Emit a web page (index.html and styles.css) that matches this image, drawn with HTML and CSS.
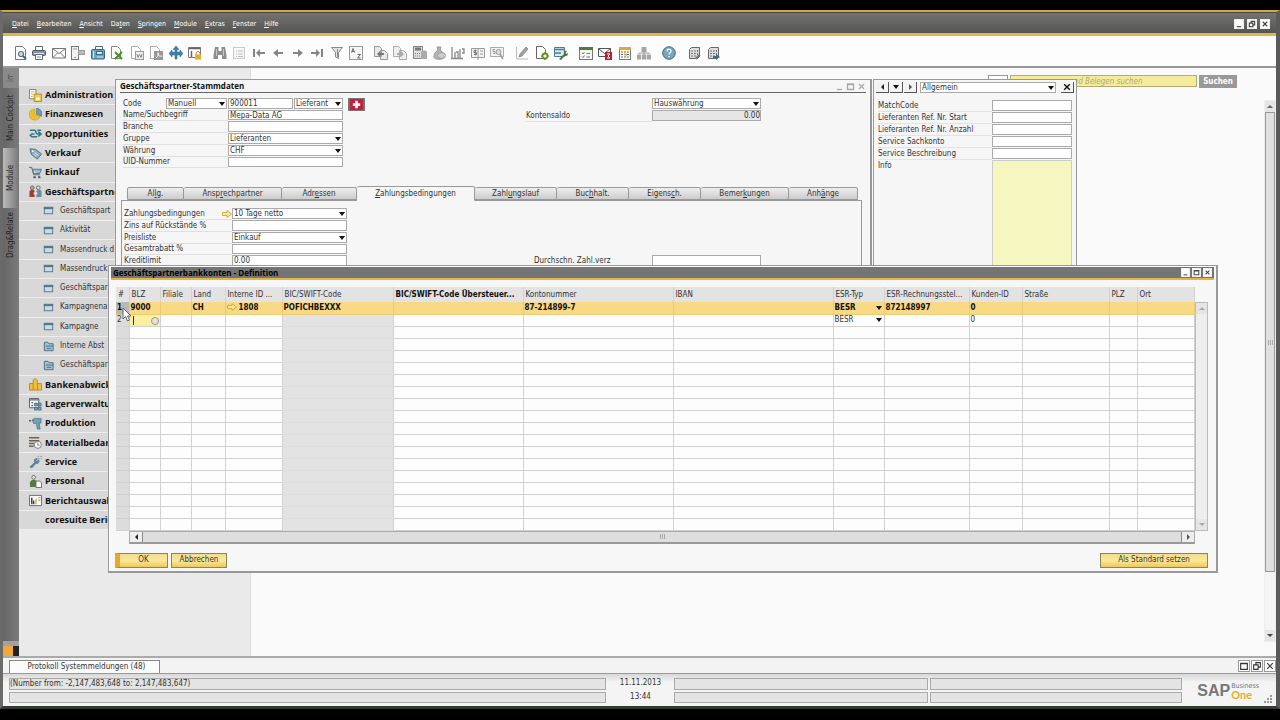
FILE: index.html
```html
<!DOCTYPE html>
<html lang="de">
<head>
<meta charset="utf-8">
<title>SAP Business One</title>
<link rel="stylesheet" href="styles.css">
</head>
<body>
<svg class="defs" aria-hidden="true">
  <symbol id="preview" viewBox="0 0 14 14"><path d="M2.500 .5h7l3 3v10h-10z" fill="#fff" stroke="#777"/><circle cx="8" cy="8" r="2.500" fill="#cfe0ea" stroke="#56707f" stroke-width="1.200"/><path d="M10 10l3 3" stroke="#35658a" stroke-width="1.800"/></symbol>
  <symbol id="print" viewBox="0 0 14 14"><path d="M3.500 5V.5h7V5" fill="#fff" stroke="#667"/><rect x=".5" y="4.500" width="13" height="5" rx="1" fill="#8297a3" stroke="#4b5c66"/><path d="M2 7.500h10" stroke="#dce7ee"/><path d="M3.500 8.500h7v5h-7z" fill="#fff" stroke="#667"/><path d="M5 11h4" stroke="#5c92b8"/></symbol>
  <symbol id="mail" viewBox="0 0 14 14"><path d="M.5 2.500h13v9.500H.5zM.5 2.500l6.500 5 6.500-5M.5 12l5-5M13.500 12l-5-5" fill="#fafafa" stroke="#777"/></symbol>
  <symbol id="phone" viewBox="0 0 14 14"><rect x=".5" y=".5" width="7" height="13" fill="#f2f2f2" stroke="#777"/><path d="M2 3h4M3 11.500h2" stroke="#999"/><rect x="7.500" y="4.500" width="6" height="4" fill="#bbb" stroke="#999"/></symbol>
  <symbol id="fax" viewBox="0 0 14 14"><path d="M4.500 4V.5h7V4" fill="#fff" stroke="#567"/><rect x=".5" y="3.500" width="13" height="9.500" rx="1" fill="#6fa4c2" stroke="#386784"/><rect x="5.500" y="5.500" width="6" height="3" fill="#dceaf2" stroke="#386784"/><path d="M2.500 5v7M6 11h6" stroke="#d4e6f0"/></symbol>
  <symbol id="excel" viewBox="0 0 14 14"><path d="M1.500 .5h6l3 3v9h-9z" fill="#fff" stroke="#888"/><path d="M5 6l7 7M12 6l-7 7" stroke="#4c8b30" stroke-width="2"/></symbol>
  <symbol id="word" viewBox="0 0 14 14"><path d="M1.500 .5h6l3 3v9h-9z" fill="#fff" stroke="#aaa"/><rect x="5.500" y="5.500" width="8" height="8" fill="#eee" stroke="#999"/><path d="M7 8l1 3.500 1.500-3 1.500 3L12 8" fill="none" stroke="#888"/></symbol>
  <symbol id="pdf" viewBox="0 0 14 14"><path d="M1.500 .5h6l3 3v9h-9z" fill="#fff" stroke="#aaa"/><rect x="5" y="5" width="9" height="9" fill="#999"/><path d="M7 12c3-2 3-6 2-5s1 4 4 3" fill="none" stroke="#fff"/></symbol>
  <symbol id="move" viewBox="0 0 14 14"><path d="M7 0l3 3.500H8V6h3V4l3 3.500L11 11V9H8v4H6V9H3v2L0 7.500 3 4v2h3V3.500H4z" fill="#3d83ad" stroke="#28678d" stroke-width=".5"/></symbol>
  <symbol id="lock" viewBox="0 0 14 14"><path d="M.5 1.500h12v10H.5z" fill="#fff" stroke="#777"/><path d="M1 2.500h11M3.500 5v6" stroke="#666" stroke-width="1.500"/><path d="M8 9V7.500a2 2 0 014 0V9" fill="none" stroke="#b88a28"/><rect x="7" y="8.500" width="6" height="5" fill="#e8ad29"/></symbol>
  <symbol id="find" viewBox="0 0 14 14"><path d="M2 1h3.500v4h3V1H12l1.500 8v4H9V9H5v4H.5V9z" fill="#8e8e8e"/><path d="M3.500 3v7M10.500 3v7" stroke="#c5c5c5"/></symbol>
  <symbol id="newrec" viewBox="0 0 14 14"><path d="M1.500 1.500h11v11h-11z" fill="#f8f8f8" stroke="#999" stroke-dasharray="1 1"/><path d="M4 5h1m1 0h5M4 8h1m1 0h5M4 10.500h1m1 0h5" stroke="#bbb"/></symbol>
  <symbol id="first" viewBox="0 0 14 14"><path d="M1 3h2v8H1zM4 7l4-4v3h5v2H8v3z" fill="#858585"/></symbol>
  <symbol id="prev" viewBox="0 0 14 14"><path d="M2 7l5-4v3h5v2H7v3z" fill="#858585"/></symbol>
  <symbol id="next" viewBox="0 0 14 14"><path d="M12 7L7 3v3H2v2h5v3z" fill="#858585"/></symbol>
  <symbol id="last" viewBox="0 0 14 14"><path d="M13 3h-2v8h2zM10 7L6 3v3H1v2h5v3z" fill="#858585"/></symbol>
  <symbol id="filter" viewBox="0 0 14 14"><path d="M1.500 1.500h11L8.500 6.500v6l-3-1.500V6.500z" fill="#e4e4e4" stroke="#888"/><path d="M7.500 3v8" stroke="#888"/></symbol>
  <symbol id="sort" viewBox="0 0 14 14"><rect x=".5" y=".5" width="13" height="13" fill="#f5f5f5" stroke="#999"/><path d="M2.500 6.500l1.500-4 1.500 4M3 5.500h2M8.500 8.500h3l-3 3.500h3" fill="none" stroke="#666"/></symbol>
  <symbol id="docleft" viewBox="0 0 14 14"><path d="M.5 .5h5l2 2v8h-7zM6.500 4.500h4l3 3v6h-7z" fill="#eaeaea" stroke="#999"/><path d="M3 8l3-3v2h4v2H6v2z" fill="#777"/></symbol>
  <symbol id="docright" viewBox="0 0 14 14"><path d="M.5 .5h5l2 2v8h-7zM6.500 4.500h4l3 3v6h-7z" fill="#eee" stroke="#aaa"/><path d="M11 8L8 5v2H4v2h4v2z" fill="#aaa"/></symbol>
  <symbol id="calc" viewBox="0 0 14 14"><rect x=".5" y=".5" width="9" height="12" fill="#ddd" stroke="#888"/><path d="M2 3h6" stroke="#777" stroke-width="3"/><path d="M2 7.500h6M2 10h6" stroke="#888" stroke-dasharray="1 1"/><path d="M8 6c2-2 5-2 6 0v7H8z" fill="#aaa"/></symbol>
  <symbol id="money" viewBox="0 0 14 14"><path d="M5 1h4L8 4c3 2 4 4 4 7 0 3-10 3-10 0 0-3 1-5 4-7z" fill="#b5b5b5" stroke="#949494"/><ellipse cx="9.500" cy="9.500" rx="4" ry="3" fill="#ccc" stroke="#999"/></symbol>
  <symbol id="chart" viewBox="0 0 14 14"><path d="M1 1v11M4 6v6M5 6h2v6M9 3v9M11 3h2v4h-2M0 12.500h12" fill="none" stroke="#888" stroke-width="1.300"/></symbol>
  <symbol id="ledger" viewBox="0 0 14 14"><path d="M.5 2.500h13v9H.5zM7 2.500V14M9 5h3M9 8h3" fill="#f3f3f3" stroke="#999"/><path d="M5.500 4.500H3v2h2.500v2H3M4.300 3.500v6" fill="none" stroke="#777"/></symbol>
  <symbol id="audit" viewBox="0 0 14 14"><path d="M.5 1.500h13v9H.5z" fill="#f3f3f3" stroke="#aaa"/><path d="M5 3.500H3v2h2v2H3" fill="none" stroke="#999"/><circle cx="8.500" cy="6" r="2.500" fill="#ddd" stroke="#999"/><path d="M10 8l3 5" stroke="#999" stroke-width="1.500"/></symbol>
  <symbol id="pencil" viewBox="0 0 14 14"><path d="M1.500 1v12H13" fill="none" stroke="#bbb"/><path d="M4 11l1-3 6-7 2 2-6 7z" fill="#a5a5a5" stroke="#777" stroke-width=".7"/></symbol>
  <symbol id="docgear" viewBox="0 0 14 14"><path d="M1.500 .5h6l3 3v9h-9z" fill="#fff" stroke="#666"/><circle cx="10" cy="10" r="2.500" fill="#fff" stroke="#659321" stroke-width="1.800"/><path d="M10 6v1.500M10 12.500V14M6 10h1.500M12.500 10H14" stroke="#659321" stroke-width="1.500"/></symbol>
  <symbol id="tools" viewBox="0 0 14 14"><path d="M.5 1.500h10v9H.5z" fill="#dceaf1" stroke="#4a7c98"/><path d="M1 3.500h9M1 7h6" stroke="#4a7c98" stroke-width="1.500"/><path d="M5 13l5-5c-1-3 1-4 3-3L11.500 7l1 1L14 6.500c0 3-1.500 4-3.500 3.500L7 14z" fill="#497a2c"/></symbol>
  <symbol id="tasks" viewBox="0 0 14 14"><rect x=".5" y="1.500" width="13" height="12" fill="#f4f4f4" stroke="#777"/><path d="M0 2.500h14" stroke="#537b32" stroke-width="3"/><path d="M3 7l1 1 1.500-2M7.500 7.500H11M3 10.500l1 1 1.500-2M7.500 11H11" fill="none" stroke="#777"/></symbol>
  <symbol id="alert" viewBox="0 0 14 14"><path d="M.5 2.500h12v8H.5zM.5 2.500l6 5 6-5" fill="#fff" stroke="#555"/><rect x="7" y="6" width="7" height="8" fill="#b9202c"/><path d="M9 8h3l-2 2 2 2H9" fill="none" stroke="#fff"/></symbol>
  <symbol id="calendar" viewBox="0 0 14 14"><rect x="1.500" y="1.500" width="11" height="12" fill="#fff" stroke="#777"/><path d="M1 2.500h12" stroke="#e2aa29" stroke-width="3"/><path d="M3 6h8M3 8.500h8M3 11h8" stroke="#666" stroke-dasharray="2 1"/><path d="M6 8.500h3" stroke="#e2aa29" stroke-width="2"/></symbol>
  <symbol id="org" viewBox="0 0 14 14"><path d="M4.500 1h5v5h-5zM0 8.500h4.200v5H0zM5 8.500h4.200v5H5zM9.800 8.500H14v5H9.800z" fill="#a6a6a6"/><path d="M7 5v4M2 8V7h10v1" fill="none" stroke="#999"/></symbol>
  <symbol id="help" viewBox="0 0 14 14"><circle cx="7" cy="7" r="6.300" fill="#78a5bd" stroke="#426a80"/><path d="M5 5.500c0-3 4-3 4-.5C9 7 7 6.500 7 8.500M7 10v1.300" fill="none" stroke="#fff" stroke-width="1.200"/></symbol>
  <symbol id="server" viewBox="0 0 14 14"><path d="M2.500 3.500l2-2h8v9l-2 2h-8z" fill="#ddd" stroke="#666"/><path d="M4 5h5M4 7.500h5M4 10h5M10.500 4v6" stroke="#777" stroke-dasharray="2 1"/><path d="M8 12l4-4 1.500 1.500-4 4z" fill="#777"/></symbol>
  <symbol id="server2" viewBox="0 0 14 14"><path d="M2.500 3.500l2-2h8v9l-2 2h-8z" fill="#ddd" stroke="#666"/><path d="M4 5h5M4 7.500h5M4 10h5M10.500 4v6" stroke="#777" stroke-dasharray="2 1"/><path d="M7 10h3V8l4 3-4 3v-2H7z" fill="#3d6d94"/></symbol>

  <symbol id="admin" viewBox="0 0 14 14"><path d="M.5 .5h7v10h-7z" fill="#fff" stroke="#777"/><path d="M2 3h4M2 5.500h3M2 8h2" stroke="#e0a32e"/><path d="M5.500 5.500h8v8h-8z" fill="#f5c944" stroke="#b08a2b"/><path d="M7.500 9h4v3h-4z" fill="#fff"/></symbol>
  <symbol id="finance" viewBox="0 0 14 14"><path d="M6 1a6 6 0 106 8L6.500 7z" fill="#f3bc2b" stroke="#c2922a" stroke-width=".6"/><path d="M8 0a6.500 6.500 0 015.500 9L8 6.500z" fill="#6b9ab4" stroke="#406b82" stroke-width=".6"/></symbol>
  <symbol id="opport" viewBox="0 0 14 14"><path d="M1 3.500h5c2 0 1 4 3 4h4M10 5l3 2.500L10 10M13 3.500H9M6 7.500H3L1.500 9 3 10.500h6" fill="none" stroke="#397582" stroke-width="1.800"/></symbol>
  <symbol id="sales" viewBox="0 0 14 14"><path d="M1 2l6 .5 6.500 5L9 13 2.500 8z" fill="#89aebf" stroke="#446f83"/><circle cx="4" cy="4.500" r="1" fill="#fff"/><path d="M6 6l4 3M5 8l3 2" stroke="#dceaf0"/></symbol>
  <symbol id="cart" viewBox="0 0 14 14"><path d="M0 1.500h3l2 8h7M4 3.500h9.500l-2 4.500H5z" fill="#9db9c6" stroke="#4c7284"/><circle cx="6" cy="12" r="1.300" fill="#46606d"/><circle cx="11" cy="12" r="1.300" fill="#46606d"/></symbol>
  <symbol id="partner" viewBox="0 0 14 14"><circle cx="3.500" cy="3" r="2" fill="#aaa" stroke="#666"/><circle cx="10" cy="3" r="2" fill="#ddd" stroke="#666"/><path d="M.5 13V7c1-2 5-2 5.500 0v6z" fill="#a73b31"/><path d="M8 13V7c1-2 5-2 5.500 0v6z" fill="#688d9d"/><path d="M5 9h4" stroke="#eee" stroke-width="2"/></symbol>
  <symbol id="form" viewBox="0 0 14 14"><rect x="2.500" y="3.500" width="9" height="7" fill="#c7dbe4" stroke="#557888"/><path d="M2 4.500h10" stroke="#4c768b" stroke-width="2"/></symbol>
  <symbol id="folder" viewBox="0 0 14 14"><path d="M2.500 11.500v-9h4l1 1.500h4.500v7.500z" fill="#a6c2d0" stroke="#497083"/><path d="M4 6.500h8M5 9h5" stroke="#497083"/></symbol>
  <symbol id="bank" viewBox="0 0 14 14"><path d="M.5 13V6h4V2c2-2 5-1 4.500 2v2h4.500v7z" fill="#f2bf3c" stroke="#b8862c"/><path d="M4.500 6v7M9 6v7" stroke="#b8862c"/></symbol>
  <symbol id="stock" viewBox="0 0 14 14"><path d="M.5 .5h10v10H.5z" fill="#fff" stroke="#555"/><path d="M1 2h9M2.500 5h2M2.500 8h2" stroke="#567" stroke-width="1.500"/><path d="M6 5.500h3v3H6zM10 5.500h3v3h-3zM6 10h3v3H6zM10 10h3v3h-3z" fill="#74a8bc" stroke="#38667a" stroke-width=".8"/></symbol>
  <symbol id="drill" viewBox="0 0 14 14"><path d="M0 4h4" stroke="#555" stroke-width="1.500" stroke-dasharray="2 1"/><path d="M4 2.500l2-1h7v5h-2l1 6.500H9L8 7H5z" fill="#70a0b6" stroke="#416b7f" stroke-width=".7"/></symbol>
  <symbol id="mrp" viewBox="0 0 14 14"><path d="M0 2h11M0 5h11M0 8h6M0 11h5" stroke="#6e6252" stroke-width="1.600"/><circle cx="9.500" cy="9.500" r="3.800" fill="#fff" stroke="#777"/><path d="M9.500 7v3h2" fill="none" stroke="#777"/></symbol>
  <symbol id="service" viewBox="0 0 14 14"><path d="M1 13l5-5c-1-3 1-5 3-4L7.500 6l1 1L10.500 5c1 3-1 5-3 4L3 14z" fill="#568ba4" stroke="#396577" stroke-width=".6"/><path d="M9 1.500h5M10 4h4" stroke="#999" stroke-dasharray="2 1"/></symbol>
  <symbol id="staff" viewBox="0 0 14 14"><circle cx="5" cy="2.500" r="2" fill="#eee" stroke="#666"/><path d="M1 13V8c1-4 7-4 8 0v5z" fill="#567a43"/><path d="M7.500 6.500h4l2 2v5h-6z" fill="#fff" stroke="#666"/></symbol>
  <symbol id="report" viewBox="0 0 14 14"><path d="M.5 1.500h13v11H.5z" fill="#fff" stroke="#666"/><path d="M3 4v7M5 7v4" stroke="#334" stroke-width="1.500"/><path d="M7.500 5v6" stroke="#e6b32b" stroke-width="1.700"/><path d="M10 4h2.500M10 6.500h2.500" stroke="#888"/></symbol>
  <symbol id="arrow" viewBox="0 0 10 8"><path d="M.5 2.500H5v-2L9.500 4 5 7.500v-2H.5z" fill="#ffe97c" stroke="#c9b055"/></symbol>
  <symbol id="min" viewBox="0 0 9 9"><path d="M2 7.500h5"/></symbol>
  <symbol id="max" viewBox="0 0 9 9"><path d="M1.500 2h6v5.500h-6zM1.500 2.500h6"/></symbol>
  <symbol id="restore" viewBox="0 0 9 9"><path d="M3.500 3V1.500h4v4H6M1.500 3.500h4v4h-4z"/></symbol>
  <symbol id="close" viewBox="0 0 9 9"><path d="M2 2l5 5M7 2l-5 5"/></symbol>
</svg>

<div class="app">
  <header class="menubar">
    <nav class="menus">
      <button><u>D</u>atei</button><button><u>B</u>earbeiten</button><button><u>A</u>nsicht</button><button>Da<u>t</u>en</button><button><u>S</u>pringen</button><button><u>M</u>odule</button><button><u>E</u>xtras</button><button><u>F</u>enster</button><button><u>H</u>ilfe</button>
    </nav>
    <div class="winbtns main-btns">
      <button aria-label="Minimieren"><svg><use href="#min"/></svg></button>
      <button aria-label="Wiederherstellen"><svg><use href="#restore"/></svg></button>
      <button aria-label="Schließen"><svg><use href="#close"/></svg></button>
    </div>
  </header>

  <div class="toolbar" id="toolbar"></div>

  <main class="desk">
    <div class="rail">
      <span class="rail-tab rail-first">irr</span>
      <button class="rail-tab rail-cockpit">Main Cockpit</button>
      <button class="rail-tab rail-module">Module</button>
      <button class="rail-tab rail-drag">Drag&amp;Relate</button>
      <span class="rail-end"></span>
    </div>

    <aside class="side">
      <ul class="modules" id="modules"></ul>
    </aside>

    <section class="work">
      <div class="search">
        <span class="search-kind"></span>
        <input type="text" placeholder="und Belegen suchen" aria-label="Suche in Stammdaten und Belegen">
        <button>Suchen</button>
      </div>
      <div class="vscroll work-scroll">
        <button class="up" aria-label="Nach oben"></button>
        <span class="thumb"><i class="grip"></i></span>
        <button class="down" aria-label="Nach unten"></button>
      </div>
    </section>

    <section class="window partner">
      <div class="ptitle">
        <h2>Geschäftspartner-Stammdaten</h2>
        <div class="winbtns faint">
          <button aria-label="Minimieren"><svg><use href="#min"/></svg></button>
          <button aria-label="Maximieren"><svg><use href="#max"/></svg></button>
          <button aria-label="Schließen"><svg><use href="#close"/></svg></button>
        </div>
      </div>
      <div class="head-form">
        <div class="fields">
          <div class="code-row">
            <label for="code">Code</label>
            <span class="sel"><select aria-label="Nummernserie"><option>Manuell</option></select></span>
            <input id="code" type="text" value="900011">
            <span class="sel"><select aria-label="Art"><option>Lieferant</option></select></span>
          </div>
          <label for="name">Name/Suchbegriff</label><input id="name" type="text" value="Mepa-Data AG">
          <label for="branche">Branche</label><input id="branche" type="text">
          <label for="gruppe">Gruppe</label><span class="sel"><select id="gruppe"><option>Lieferanten</option></select></span>
          <label for="curr">Währung</label><span class="sel"><select id="curr"><option>CHF</option></select></span>
          <label for="uid">UID-Nummer</label><input id="uid" type="text">
        </div>
        <svg class="flag" viewBox="0 0 16 12"><rect width="16" height="12" fill="#c4203c"/><path d="M8 2v8M4 6h8" stroke="#fff" stroke-width="3"/></svg>
        <div class="saldo">
          <span class="sel"><select aria-label="Währungsanzeige"><option>Hauswährung</option></select></span>
          <label for="saldo">Kontensaldo</label><input id="saldo" class="ro" type="text" value="0.00" readonly>
        </div>
      </div>
      <div class="tabs">
        <button>Al<u>l</u>g.</button><button>Ansp<u>r</u>echpartner</button><button>Adr<u>e</u>ssen</button><button class="on"><u>Z</u>ahlungsbedingungen</button><button>Zahl<u>u</u>ngslauf</button><button>Buc<u>h</u>halt.</button><button>Eigens<u>c</u>h.</button><button>Bemer<u>k</u>ungen</button><button>Anh<u>ä</u>nge</button>
      </div>
      <div class="pane">
        <div class="fields pay">
          <label for="zb">Zahlungsbedingungen<svg class="link"><use href="#arrow"/></svg></label><span class="sel"><select id="zb"><option>10 Tage netto</option></select></span>
          <label for="zins">Zins auf Rückstände %</label><input id="zins" type="text">
          <label for="preis">Preisliste</label><span class="sel"><select id="preis"><option>Einkauf</option></select></span>
          <label for="rabatt">Gesamtrabatt %</label><input id="rabatt" type="text">
          <label for="limit">Kreditlimit</label><input id="limit" type="text" value="0.00">
        </div>
        <div class="delay"><label for="verz">Durchschn. Zahl.verz</label><input id="verz" type="text"></div>
      </div>
    </section>

    <section class="window extra">
      <div class="extra-bar">
        <button class="nav" aria-label="Zurück"><i class="tri left"></i></button>
        <button class="nav" aria-label="Liste"><i class="tri"></i></button>
        <button class="nav" aria-label="Weiter"><i class="tri right"></i></button>
        <span class="sel"><select aria-label="Kategorie"><option>Allgemein</option></select></span>
        <button class="nav x" aria-label="Schließen"><svg><use href="#close"/></svg></button>
      </div>
      <div class="extra-form">
        <label for="e1">MatchCode</label><input id="e1" type="text">
        <label for="e2">Lieferanten Ref. Nr. Start</label><input id="e2" type="text">
        <label for="e3">Lieferanten Ref. Nr. Anzahl</label><input id="e3" type="text">
        <label for="e4">Service Sachkonto</label><input id="e4" type="text">
        <label for="e5">Service Beschreibung</label><input id="e5" type="text">
        <label for="e6" class="info">Info</label><textarea id="e6"></textarea>
      </div>
    </section>

    <section class="window dialog">
      <div class="dtitle">
        <h2>Geschäftspartnerbankkonten - Definition</h2>
        <div class="winbtns">
          <button aria-label="Minimieren"><svg><use href="#min"/></svg></button>
          <button aria-label="Maximieren"><svg><use href="#max"/></svg></button>
          <button aria-label="Schließen"><svg><use href="#close"/></svg></button>
        </div>
      </div>
      <div class="grid-area">
        <table class="accounts">
          <colgroup><col class="w-no"><col class="w-s"><col class="w-s"><col class="w-land"><col class="w-id"><col class="w-bic"><col class="w-over"><col class="w-konto"><col class="w-iban"><col class="w-typ"><col class="w-stel"><col class="w-kid"><col class="w-str"><col class="w-plz"><col></colgroup>
          <thead><tr><th>#</th><th>BLZ</th><th>Filiale</th><th>Land</th><th>Interne ID ...</th><th>BIC/SWIFT-Code</th><th class="strong">BIC/SWIFT-Code Übersteuer...</th><th>Kontonummer</th><th>IBAN</th><th>ESR-Typ</th><th>ESR-Rechnungsstel...</th><th>Kunden-ID</th><th>Straße</th><th>PLZ</th><th>Ort</th></tr></thead>
          <tbody id="rows">
            <tr class="current"><td>1</td><td>9000</td><td></td><td>CH</td><td><svg class="link"><use href="#arrow"/></svg>1808</td><td>POFICHBEXXX</td><td></td><td>87-214899-7</td><td></td><td><span class="sel"><select aria-label="ESR-Typ Zeile 1"><option>BESR</option></select></span></td><td>872148997</td><td>0</td><td></td><td></td><td></td></tr>
            <tr><td>2</td><td class="edit"><span class="caret"></span><i class="picker"></i></td><td></td><td></td><td></td><td></td><td></td><td></td><td></td><td><span class="sel"><select aria-label="ESR-Typ Zeile 2"><option>BESR</option></select></span></td><td></td><td>0</td><td></td><td></td><td></td></tr>
          </tbody>
        </table>
        <div class="vscroll table-scroll">
          <button class="up" aria-label="Nach oben"></button>
          <button class="down" aria-label="Nach unten"></button>
        </div>
        <div class="hscroll">
          <button aria-label="Nach links"><i class="tri left"></i></button>
          <span class="thumb"><i class="grip"></i></span>
          <button aria-label="Nach rechts"><i class="tri right"></i></button>
        </div>
      </div>
      <div class="actions">
        <button class="gold ok">OK</button>
        <button class="gold">Abbrechen</button>
        <button class="gold std">Als Standard setzen</button>
      </div>
      <svg class="cursor" viewBox="0 0 10 15"><path d="M1 1v11l2.500-2.500L5.500 14l2-1-2-4H9z" fill="#fff" stroke="#666"/></svg>
    </section>
  </main>

  <div class="logbar">
    <button class="logtab">Protokoll Systemmeldungen (48)</button>
    <div class="winbtns log-btns">
      <button aria-label="Maximieren"><svg><use href="#max"/></svg></button>
      <button aria-label="Wiederherstellen"><svg><use href="#restore"/></svg></button>
      <button aria-label="Schließen"><svg><use href="#close"/></svg></button>
    </div>
  </div>

  <footer class="status">
    <div class="msg">(Number from: -2,147,483,648 to: 2,147,483,647)</div><time>11.11.2013</time><div class="msg"></div><div class="msg"></div>
    <div class="logo"><b>SAP</b><span><small>Business</small><em>One</em></span>
      <svg class="size-grip" viewBox="0 0 8 8"><path d="M6 0h2v2H6zM3 3h2v2H3zM6 3h2v2H6zM0 6h2v2H0zM3 6h2v2H3zM6 6h2v2H6z" fill="#999"/></svg>
    </div>
    <div class="msg"></div><time>13:44</time><div class="msg"></div><div class="msg"></div>
  </footer>
</div>
<script src="app.js"></script>
</body>
</html>
```
FILE: styles.css
```css
* { box-sizing: border-box; }
body {
  margin: 0;
  min-height: 100vh;
  padding: 10px 0 11px;
  background: #000;
  color: #333;
  font: 8px/10px "DejaVu Sans Condensed", "DejaVu Sans", sans-serif;
  display: flex;
  overflow: hidden;
}
button, input, select, textarea { font: inherit; color: inherit; margin: 0; padding: 0; border: 0; border-radius: 0; background: none; min-width: 0; }
h2 { margin: 0; font: bold 8px/10px "Open Sans", sans-serif; color: #111; }
ul { list-style: none; margin: 0; padding: 0; }
svg { display: block; }
u { text-decoration-thickness: 1px; text-underline-offset: 1px; }
.defs { position: absolute; width: 0; height: 0; }

.app { flex: 1; min-width: 0; display: flex; flex-direction: column; border-top: 2px solid #d9a840; border-right: 4px solid #5a5a5a; border-bottom: 3px solid #353a35; border-left: 3px solid #6a6a6a; background: #fafafa; }

.menubar { height: 24px; padding: 2px 6px 0 9px; border-top: 1px solid #474747; border-bottom: 3px solid #e3b548; background: linear-gradient(#727472, #555553); color: #fff; display: flex; align-items: center; justify-content: space-between; }
.menus { display: flex; gap: 8px; }
.menus button { font-size: 7px; line-height: 10px; }

.winbtns { display: flex; gap: 2px; }
.winbtns button { width: 9px; height: 9px; background: #fff; color: #444; border: 1px solid #eee; }
.winbtns svg, .nav.x svg { width: 100%; height: 100%; fill: none; stroke: currentColor; stroke-width: 1.3; }
.main-btns { gap: 3px; }
.main-btns button { width: 10px; height: 10px; }
.faint button { color: #aaa; background: none; border: 0; }

.toolbar { height: 32px; padding: 4px 0 0 10px; display: flex; align-items: center; gap: 11px; border-bottom: 2px solid #999; background: #fdfdfd; }
.tool-group { display: flex; gap: 5px; justify-content: space-between; }
.tool-group svg { width: 14px; height: 14px; }
.g10 { width: 189px; } .g8 { width: 150px; } .g7 { width: 130px; } .g3 { width: 53px; } .g4 { width: 72px; } .g2 { width: 33px; }

.desk { flex: 1; min-height: 0; position: relative; display: flex; overflow: hidden; }
.rail { width: 16px; background: linear-gradient(90deg, #666, #7b7b7b); display: flex; flex-direction: column; }
.rail-tab { writing-mode: vertical-rl; transform: rotate(180deg); width: 16px; text-align: center; line-height: 16px; color: #222; }
.rail-first { height: 20px; color: #444; background: #8a8a8a; }
.rail-cockpit { height: 60px; }
.rail-module { height: 60px; background: linear-gradient(90deg, #777, #bbb); }
.rail-drag { height: 54px; }
.rail-end { margin-top: auto; height: 15px; border-top: 5px solid #a2a2a2; background: linear-gradient(90deg, #f0a83a 10px, #222 10px); }
.side { width: 232px; border-right: 1px solid #ddd; background: #eaeaea; padding-top: 18px; }
.modules { height: 444px; display: grid; grid-auto-rows: 1fr; }
.modules li { display: flex; align-items: center; gap: 3px; padding-left: 10px; border-bottom: 1px solid #eee; background: #d8d8d8; white-space: nowrap; }
.modules .top { font: bold 9px/12px "Open Sans", sans-serif; color: #111; }
.modules .sub { padding-left: 23px; gap: 5px; }
.modules svg { width: 13px; height: 13px; }
.modules .no-ico { padding-left: 26px; }

.work { flex: 1; display: grid; grid-template: 32px 1fr / 1fr 12px; padding-bottom: 14px; }
.search { grid-column: 1 / -1; justify-self: end; margin: 7px 39px 0 0; display: flex; align-items: flex-start; gap: 2px; }
.search-kind { width: 20px; height: 12px; border: 1px solid #999; background: #fff; }
.search input { width: 187px; height: 12px; padding-left: 58px; border: 1px solid #b5ac72; background: #f5ec9b; }
.search input::placeholder { color: #b3ab74; font-style: italic; }
.search button { width: 38px; height: 13px; background: #999; color: #fff; font-weight: bold; }
.vscroll { display: flex; flex-direction: column; background: #eee; border: 1px solid #bbb; }
.vscroll button { height: 11px; display: flex; align-items: center; justify-content: center; background: #e5e5e5; }
.up::before { content: ""; border: 3px solid transparent; border-top: 0; border-bottom-color: #666; }
.down::before { content: ""; border: 3px solid transparent; border-bottom: 0; border-top-color: #444; }
.vscroll .down { margin-top: auto; }
.work-scroll { grid-column: 2; background: #f4f4f4; border-color: #eee; }
.work-scroll .thumb { height: 460px; border: 1px solid #999; background: #e0e0e0; display: flex; align-items: center; justify-content: center; }
.grip { width: 5px; height: 5px; background: repeating-linear-gradient(90deg, #aaa 0 1px, transparent 1px 2px); }

.window { position: absolute; background: #f6f6f6; border: 1px solid #999; }
.partner { left: 112px; right: 404px; top: 11px; height: 200px; padding: 0 4px; border-right: 2px solid #999; }
.ptitle { height: 13px; display: flex; justify-content: space-between; align-items: center; border-bottom: 1px solid #666; }
.sel { position: relative; display: block; min-width: 0; }
.sel select { appearance: none; width: 100%; height: 100%; display: block; }
.sel::after { content: ""; position: absolute; right: 1px; top: 50%; margin-top: -2px; border: 3px solid transparent; border-top: 4px solid #111; border-bottom: 0; pointer-events: none; }
.window .fields input, .window .fields .sel, .saldo input, .saldo .sel, .delay input, .extra input, .extra .sel { border: 1px solid #aaa; background: #fff; padding-left: 1px; margin-bottom: 1px; line-height: 9px; }
.head-form { display: grid; grid-template-columns: 220px 183px 235px; padding: 5px 0 0 3px; }
.fields { display: grid; grid-template-columns: 105px 115px; grid-template-rows: 12px 11px 12px 12px 12px 11px; }
.fields > label, .saldo > label { border-bottom: 1px solid #e0e0e0; line-height: 12px; white-space: nowrap; }
.code-row { grid-column: 1 / -1; display: grid; grid-template-columns: 42px 61px 65px 49px; column-gap: 1px; line-height: 12px; }
.flag { width: 17px; height: 13px; margin-left: 5px; border: 1px solid #777; }
.saldo { display: grid; grid-template-columns: 126px 109px; grid-template-rows: 12px 12px; align-content: start; }
.saldo .sel { grid-column: 2; }
.saldo .ro { background: #e6e6e6; text-align: right; }
.tabs { display: grid; grid-template-columns: 57fr 98fr 75fr 118fr 82fr 72fr 72fr 88fr 69fr; margin: 18px 8px 0 7px; align-items: end; height: 14px; }
.tabs button { height: 13px; border: 1px solid #999; border-left: 0; border-radius: 2px 2px 0 0; background: linear-gradient(#eee, #ccc); }
.tabs button:first-child { border-left: 1px solid #999; }
.tabs .on { height: 15px; background: #f6f6f6; border-bottom-color: #f6f6f6; margin-bottom: -1px; z-index: 1; }
.pane { margin: 0 4px 0 1px; height: 90px; border: 1px solid #999; padding: 7px 0 0 2px; display: grid; grid-template-columns: 222px 188px 227px; }
.pay { grid-template-columns: 108px 115px; grid-template-rows: 12px 12px 12px 11px 12px; align-content: start; }
.link { width: 10px; height: 8px; }
.fields label { display: flex; justify-content: space-between; align-items: center; }
.delay { grid-column: 3; padding-top: 47px; display: grid; grid-template-columns: 118px 109px; grid-template-rows: 12px; line-height: 12px; }

.extra { right: 199px; width: 204px; top: 11px; height: 200px; padding: 0 2px; }
.extra-bar { height: 14px; padding: 2px 0 0; display: flex; gap: 1px; }
.extra-bar .sel { flex: 1; margin: 0 4px 0 2px; height: 11px; }
.nav { width: 13px; height: 11px; display: flex; align-items: center; justify-content: center; border-right: 1px solid #555; border-bottom: 1px solid #555; color: #111; background: #f3f3f3; }
.tri { border: 3px solid transparent; border-top: 4px solid #111; border-bottom: 0; }
.tri.left { border: 3px solid transparent; border-left: 0; border-right-color: #222; }
.tri.right { border: 3px solid transparent; border-right: 0; border-left-color: #555; }
.extra-form { padding: 6px 2px 0; display: grid; grid-template-columns: 114px 80px; grid-template-rows: repeat(5, 12px) 120px; }
.extra-form label { border-bottom: 1px solid #e3e3e3; line-height: 12px; white-space: nowrap; }
.extra-form .info { border: 0; }
.extra-form textarea { border: 1px solid #ccc; background: #f5f6c0; resize: none; }

.dialog { left: 105px; right: 58px; top: 197px; height: 308px; background: #f7f7f7; border-right: 2px solid #999; border-bottom: 2px solid #999; box-shadow: inset 1px 1px #fff; padding: 1px 2px; }
.dtitle { height: 13px; display: flex; align-items: center; justify-content: space-between; padding: 0 2px; background: #757575; border-bottom: 2px solid #e2b648; }
.dtitle h2 { color: #000; }
.grid-area { margin: 7px 6px 0 5px; display: grid; grid-template-columns: 1fr 13px; }
.accounts { width: 100%; table-layout: fixed; border-collapse: collapse; background: #fdfdfd; line-height: 10px; }
.w-no { width: 13px; } .w-s { width: 31px; } .w-land { width: 34px; } .w-id { width: 57px; } .w-bic { width: 111px; } .w-over { width: 130px; } .w-konto { width: 150px; } .w-iban { width: 160px; } .w-typ { width: 51px; } .w-stel { width: 85px; } .w-kid { width: 53px; } .w-str { width: 87px; } .w-plz { width: 28px; }
.accounts th, .accounts td { padding: 0 1px; text-align: left; font-weight: normal; white-space: nowrap; border-right: 1px solid #d2d2d2; overflow: hidden; }
.accounts th { height: 15px; padding-left: 2px; background: #e3e3e3; }
.accounts th.strong { font-weight: bold; color: #111; }
.accounts td { height: 12px; border-bottom: 1px solid #d0d0d0; }
.accounts td:first-child { background: #dcdcdc; }
.accounts td:nth-child(6) { background: #e3e3e3; border-bottom-color: #dedede; }
.accounts .current td { background: #f8da86; font-weight: bold; color: #111; border-color: #eccb75; }
.accounts .current td:first-child { background: #b8b8b8; }
.accounts td .link { display: inline-block; margin-right: 2px; vertical-align: -1px; }
.accounts .sel { height: 10px; line-height: 10px; }
.accounts .edit { background: #fbf0a0; }
.caret { float: left; width: 1px; height: 9px; margin-left: 2px; background: #333; }
.picker { float: right; width: 8px; height: 8px; margin-top: 1px; border: 1px solid #999; border-radius: 50%; background: #e4e4dc; }
.table-scroll { margin-top: 15px; }
.table-scroll .up::before { border-bottom-color: #aaa; }
.table-scroll .down::before { border-top-color: #aaa; }
.hscroll { margin-left: 13px; height: 13px; display: flex; border: 1px solid #aaa; border-bottom: 2px solid #999; background: #eee; }
.hscroll button { width: 12px; display: flex; align-items: center; justify-content: center; }
.hscroll .thumb { flex: 1; background: #dedede; border-left: 1px solid #888; border-right: 1px solid #888; display: flex; align-items: center; justify-content: center; }
.actions { margin: 9px 6px 0 4px; display: flex; gap: 3px; }
.gold { height: 15px; min-width: 56px; padding: 0 6px; border: 1px solid #8f8458; background: linear-gradient(#f0dc91, #fae99a 50%, #edc95d); }
.ok { min-width: 53px; border-left: 5px solid #e9a928; }
.std { margin-left: auto; min-width: 108px; }
.cursor { position: absolute; left: 13px; top: 41px; width: 10px; height: 15px; }

.logbar { height: 18px; padding: 2px 0 0 6px; border-top: 2px solid #aaa; border-bottom: 1px solid #999; background: #f3f3f3; display: flex; justify-content: space-between; }
.logtab { width: 151px; border: 1px solid #888; border-bottom: 0; background: #fbfbfb; padding-left: 4px; }
.log-btns { gap: 1px; }
.log-btns button { width: 12px; height: 12px; border-color: #999; color: #333; }
.log-btns svg { stroke-width: 1; }
.status { padding: 4px 4px 3px 6px; display: grid; grid-template-columns: 598fr 64px 254fr 252fr 88px; grid-template-rows: 12px 11px; gap: 2px 2px; background: linear-gradient(#d8d8d8, #f4f4f4 8px); }
.msg { border: 1px solid #aaa; background: #e4e4e4; line-height: 10px; white-space: nowrap; }
.status time { text-align: center; line-height: 10px; }
.logo { grid-column: 5; grid-row: 1 / 3; display: flex; align-items: center; justify-content: flex-end; gap: 1px; color: #777; }
.logo b { font: bold 16px/20px "Liberation Sans", sans-serif; }
.logo span { display: flex; flex-direction: column; line-height: 8px; }
.logo small { font-size: 7px; }
.logo em { font: bold 11px/10px Lato, sans-serif; color: #e8ab2b; }
.size-grip { width: 8px; height: 8px; align-self: flex-end; margin-left: 4px; }
```
FILE: app.js
```js
const icon = id => `<svg><use href="#${id}"/></svg>`;

const tools = [
  ['g10', 'preview print mail phone fax excel word pdf move lock'],
  ['g8', 'find newrec first prev next last filter sort'],
  ['g7', 'docleft docright calc money chart ledger audit'],
  ['g3', 'pencil docgear tools'],
  ['g4', 'tasks alert calendar org'],
  ['g1', 'help'],
  ['g2', 'server server2']
];
document.getElementById('toolbar').innerHTML = tools.map(([size, ids]) =>
  `<div class="tool-group ${size}">` + ids.split(' ').map(id => `<button aria-label="${id}">${icon(id)}</button>`).join('') + '</div>'
).join('');

const modules = [
  ['top', 'admin', 'Administration'], ['top', 'finance', 'Finanzwesen'], ['top', 'opport', 'Opportunities'],
  ['top', 'sales', 'Verkauf'], ['top', 'cart', 'Einkauf'], ['top', 'partner', 'Geschäftspartner'],
  ['sub', 'form', 'Geschäftspart'], ['sub', 'form', 'Aktivität'], ['sub', 'form', 'Massendruck d'],
  ['sub', 'form', 'Massendruck'], ['sub', 'form', 'Geschäftspar'], ['sub', 'form', 'Kampagnena'],
  ['sub', 'form', 'Kampagne'], ['sub', 'folder', 'Interne Abst'], ['sub', 'folder', 'Geschäftspar'],
  ['top', 'bank', 'Bankenabwickl'], ['top', 'stock', 'Lagerverwaltu'], ['top', 'drill', 'Produktion'],
  ['top', 'mrp', 'Materialbedar'], ['top', 'service', 'Service'], ['top', 'staff', 'Personal'],
  ['top', 'report', 'Berichtauswah'], ['top no-ico', '', 'coresuite Beric']
];
document.getElementById('modules').innerHTML = modules.map(([kind, id, text]) =>
  `<li class="${kind}">${id ? icon(id) : ''}${text}</li>`).join('');

const EMPTY_ROWS = 17;
document.getElementById('rows').insertAdjacentHTML('beforeend',
  ('<tr>' + '<td></td>'.repeat(15) + '</tr>').repeat(EMPTY_ROWS));
```
